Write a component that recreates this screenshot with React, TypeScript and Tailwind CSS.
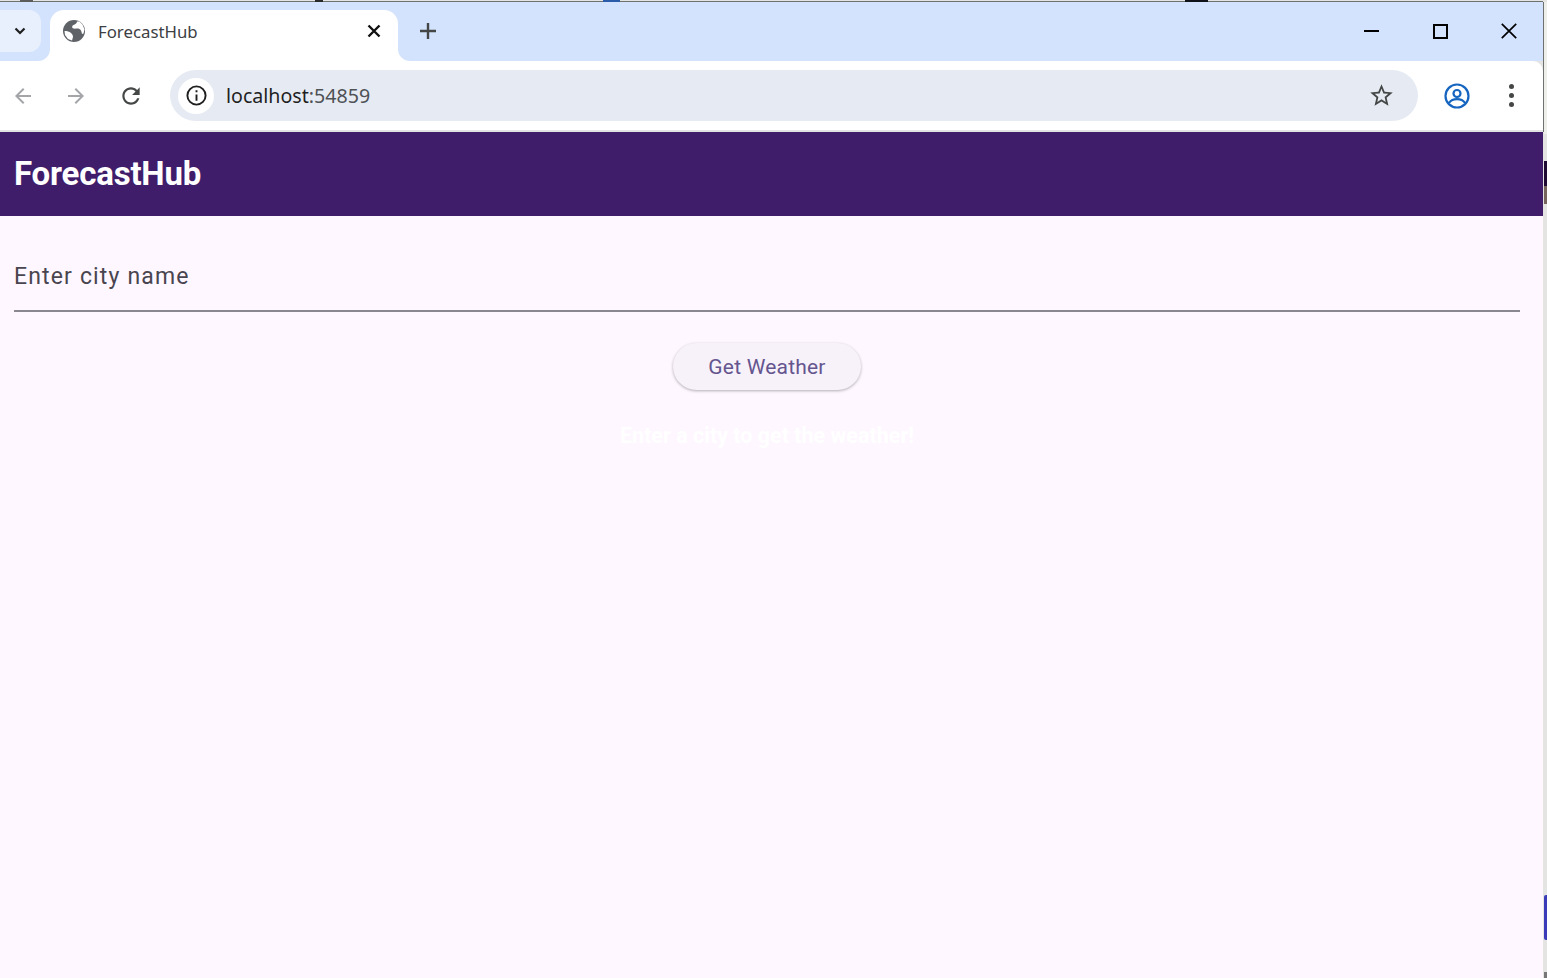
const uiFont = "font-['Noto_Sans','Open_Sans',sans-serif]";

function Icon({ d, className }: { d: string; className: string }) {
  return (
    <svg viewBox="0 0 24 24" fill="currentColor" className={className}>
      <path d={d} />
    </svg>
  );
}

function TabStrip() {
  return (
    <div className="flex h-[59px] items-start bg-[#d3e3fd] pt-[8px]">
      <button className="flex h-[42px] w-[41px] items-center justify-center rounded-r-[12px] bg-[#e8f0fe] text-[#1f1f1f]">
        <svg viewBox="0 0 16 16" fill="none" stroke="currentColor" strokeWidth="2.2" className="mr-[2px] h-4 w-4">
          <path d="M3.5 5.5 8 10l4.5-4.5" />
        </svg>
      </button>
      <div className="relative ml-[9px] flex h-[51px] w-[348px] items-center rounded-t-[14px] bg-white pb-[7px] pl-[12px] pr-[16px]">
        <div className="absolute bottom-0 left-[-12px] h-3 w-3 bg-white">
          <div className="h-full w-full rounded-br-[12px] bg-[#d3e3fd]" />
        </div>
        <div className="absolute bottom-0 right-[-12px] h-3 w-3 bg-white">
          <div className="h-full w-full rounded-bl-[12px] bg-[#d3e3fd]" />
        </div>
        <svg viewBox="0 0 24 24" className="-mt-[2px] h-[24px] w-[24px]">
          <circle cx="12" cy="12" r="11" fill="#5f6368" />
          <path d="M2.500 12c2.500 0 5 .500 6.500 2s2 2.500 2 4l-1 3.500-4-1.500-3-4z" fill="#fff" />
          <path d="M15 2.500c0 2-2 3-3.500 3.500s-2 3 0 3.500 4-.500 6 .500 2 3 2.500 5l1.500-.500 1-4-2-5-3-3z" fill="#fff" />
        </svg>
        <span className={`ml-3 flex-1 text-[16.8px] text-[#3c4043] ${uiFont}`}>ForecastHub</span>
        <svg viewBox="0 0 16 16" fill="none" stroke="#111" strokeWidth="2.4" className="-mt-[2px] h-4 w-4">
          <path d="M2.500 2.500 13.500 13.500M13.500 2.500 2.500 13.500" />
        </svg>
      </div>
      <svg viewBox="0 0 18 18" fill="none" stroke="#444746" strokeWidth="2.4" className="ml-[21px] mt-[12px] h-[18px] w-[18px]">
        <path d="M9 1v16M1 9h16" />
      </svg>
      <div className="ml-auto flex h-[42px] items-center pr-[26px] text-black">
        <div className="h-[2px] w-[15px] bg-black" />
        <div className="ml-[54px] h-[15px] w-[15px] border-2 border-black" />
        <svg viewBox="0 0 16 16" fill="none" stroke="currentColor" strokeWidth="1.7" className="ml-[53px] h-4 w-4">
          <path d="M.8.8 15.200 15.200M15.200.8.8 15.200" />
        </svg>
      </div>
    </div>
  );
}

function Toolbar() {
  return (
    <div className="flex h-[71px] items-center rounded-tr-[10px] border-b-2 border-[#e3e3e3] bg-white">
      <Icon
        className="ml-[11px] h-6 w-6 text-[#a3a5a8]"
        d="M20 11H7.830l5.590-5.590L12 4l-8 8 8 8 1.410-1.410L7.830 13H20v-2z"
      />
      <Icon
        className="ml-[29px] h-6 w-6 text-[#a3a5a8]"
        d="M12 4l-1.410 1.410L16.170 11H4v2h12.170l-5.580 5.590L12 20l8-8z"
      />
      <Icon
        className="ml-[30px] h-[26px] w-[26px] text-[#444746]"
        d="M17.650 6.350C16.200 4.900 14.210 4 12 4c-4.420 0-7.990 3.580-7.990 8s3.570 8 7.990 8c3.730 0 6.840-2.550 7.730-6h-2.080c-.820 2.330-3.040 4-5.650 4-3.310 0-6-2.690-6-6s2.690-6 6-6c1.660 0 3.140.690 4.220 1.780L13 11h7V4l-2.350 2.350z"
      />
      <div className="ml-[26px] flex h-[51px] w-[1248px] items-center rounded-full bg-[#e6ebf3] pl-2 pr-[23px]">
        <div className="flex h-9 w-9 items-center justify-center rounded-full bg-white">
          <svg viewBox="0 0 24 24" fill="none" stroke="#1f1f1f" strokeWidth="2" className="h-[23px] w-[23px]">
            <circle cx="12" cy="12" r="9.500" />
            <path d="M12 11v6.500M12 6.500v2.200" />
          </svg>
        </div>
        <span className={`ml-3 flex-1 text-[19.6px] text-[#1f1f1f] ${uiFont}`}>
          localhost<span className="text-[#4f5256]">:54859</span>
        </span>
        <Icon
          className="h-[27px] w-[27px] text-[#444746]"
          d="M22 9.240l-7.190-.620L12 2 9.190 8.630 2 9.240l5.460 4.730L5.820 21 12 17.270 18.180 21l-1.630-7.030L22 9.240zM12 15.400l-3.760 2.270 1-4.280-3.320-2.880 4.380-.380L12 6.100l1.710 4.040 4.380.380-3.320 2.880 1 4.280L12 15.400z"
        />
      </div>
      <svg viewBox="0 0 26 26" fill="none" stroke="#1565c0" strokeWidth="2.200" className="ml-[26px] h-[26px] w-[26px]">
        <circle cx="13" cy="13" r="11.500" />
        <circle cx="13" cy="10.500" r="3.500" />
        <path d="M5 20c2-3 5-3.800 8-3.800s6 .800 8 3.800" />
      </svg>
      <div className="ml-[39px] flex flex-col gap-[4px]">
        <div className="h-[5px] w-[5px] rounded-full bg-[#444746]" />
        <div className="h-[5px] w-[5px] rounded-full bg-[#444746]" />
        <div className="h-[5px] w-[5px] rounded-full bg-[#444746]" />
      </div>
    </div>
  );
}

export default function App() {
  return (
    <div className="relative flex h-[978px] w-[1547px] overflow-hidden bg-[#e4e4e2]">
      <div className="flex w-[1543px] flex-col pt-[1px]">
        <div className="flex flex-1 flex-col border-t border-[#6d7170]">
          <TabStrip />
          <Toolbar />
          <header className="flex h-[84px] items-center bg-[#3f1d6b] px-[14px]">
            <h1 className="font-['Roboto',sans-serif] text-[33px] font-bold tracking-[-0.2px] text-white">ForecastHub</h1>
          </header>
          <main className="flex flex-1 flex-col items-center bg-[#fef7ff] pl-[14px] pr-[23px] pt-[36px] font-['Roboto',sans-serif]">
            <div className="flex h-[60px] w-full items-center border-b-2 border-[#8b8791] pb-[8px]">
              <span className="text-[23px] tracking-[1.15px] text-[#49454f]">Enter city name</span>
            </div>
            <button className="mt-[31px] flex h-[47px] w-[188px] items-center justify-center rounded-full bg-[#f7f2fa] pt-[2px] text-[21px] tracking-[0.2px] text-[#65558f] shadow-[0_1px_3px_rgba(0,0,0,0.3)]">
              Get Weather
            </button>
            <p className="mt-[30px] text-[21.5px] font-bold text-white">Enter a city to get the weather!</p>
          </main>
        </div>
      </div>
      <div className="absolute left-[20px] top-0 h-[2px] w-[13px] bg-[#5c5c5c]" />
      <div className="absolute left-[315px] top-0 h-[2px] w-[8px] bg-[#2a2a2a]" />
      <div className="absolute left-[603px] top-0 h-[2px] w-[17px] bg-[#2a5caa]" />
      <div className="absolute left-[1185px] top-0 h-[2px] w-[23px] bg-[#10131a]" />
      <div className="absolute right-0 top-[2px] h-[132px] w-[3px] bg-[#eeeeea]" />
      <div className="absolute right-[3px] top-[2px] h-[130px] w-[1px] bg-[#6d7170]" />
      <div className="absolute right-0 top-[161px] h-[25px] w-[3px] bg-[#1e0a33]" />
      <div className="absolute right-0 top-[186px] h-[18px] w-[3px] bg-[#75655c]" />
      <div className="absolute right-0 top-[895px] h-[45px] w-[3px] rounded-l-[2px] bg-[#3c3cbb]" />
      <div className="absolute bottom-0 right-0 h-[6px] w-[3px] bg-[#777777]" />
    </div>
  );
}
